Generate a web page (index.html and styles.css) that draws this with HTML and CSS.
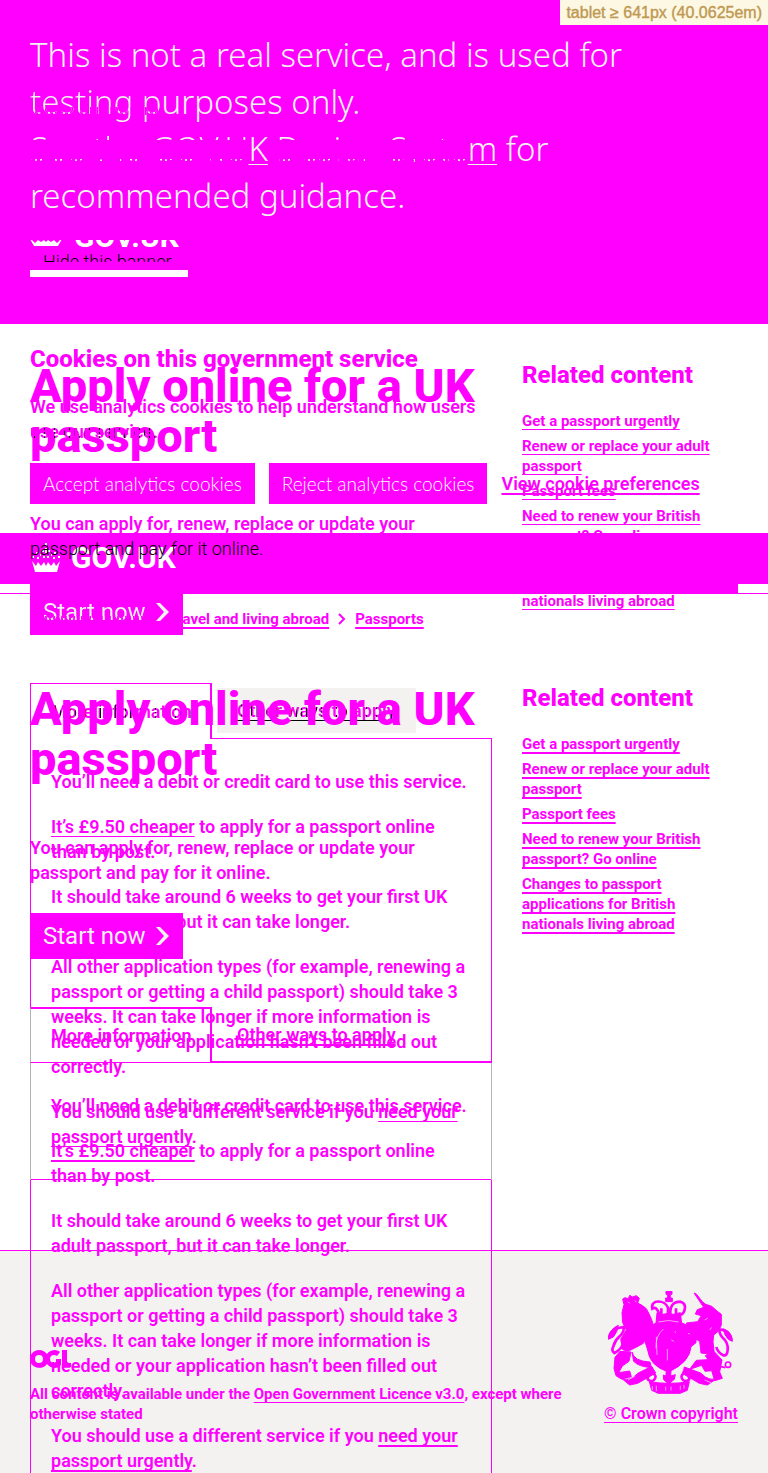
FILE: index.html
```html
<!DOCTYPE html>
<html lang="en">
<head>
<meta charset="utf-8">
<meta name="viewport" content="width=device-width, initial-scale=1">
<title>Apply online for a UK passport</title>
<link rel="stylesheet" href="styles.css">
</head>
<body>
<div class="breakpoint">tablet ≥ 641px (40.0625em)</div>
<div class="compare">

<div class="layer layer-before">
  <div class="container main">
    <main class="column">
      <h1 class="title">Apply online for a UK passport</h1>
      <p class="lead lead-raised">You can apply for, renew, replace or update your <span class="thin">passport and pay for it online.</span></p>
      <button class="start start-raised" type="button"><span class="broken">Start now</span><svg class="chevron" viewBox="0 0 14 20" aria-hidden="true"><path d="M0 1h4l9 9-9 9H0l8-9z"/></svg></button>
      <div class="tabs">
        <a class="tab tab-selected" href="#more"><span class="core">More information</span></a>
        <div class="tab-rest"><a class="tab-other" href="#other"><span class="core">Other ways to apply</span></a></div>
      </div>
      <section class="panel" id="more">
        <p>You’ll need a debit or credit card to use this service.</p>
        <p><a href="#cost">It’s £9.50 cheaper</a> to apply for a passport online than by post.</p>
        <p>It should take around 6 weeks to get your first UK adult passport, but it can take longer.</p>
        <p>All other application types (for example, renewing a passport or getting a child passport) should take 3 weeks. It can take longer if more information is needed or your application hasn’t been filled out correctly.</p>
        <p>You should use a different service if you <a href="#urgent">need your passport urgently</a>.</p>
      </section>
    </main>
    <aside class="column">
      <h2 class="heading aside-heading">Related content</h2>
      <ul class="related">
        <li><a href="#urgent">Get a passport urgently</a></li>
        <li><a href="#renew">Renew or replace your adult passport</a></li>
        <li><a href="#fees">Passport fees</a></li>
        <li><a href="#british">Need to renew your British passport? Go online</a></li>
        <li><a href="#changes">Changes to passport applications for British nationals living abroad</a></li>
      </ul>
    </aside>
  </div>
  <footer class="footer">
    <div class="licence">
      <svg class="ogl" viewBox="0 0 41 18" aria-hidden="true"><path fill-rule="evenodd" d="M9 0c4 0 6 2 8 4 2-3 5-4 8-4 2 0 4 1 5 2l-3 4c-3-2-7-1-7 3s4 5 6 3V9h5v6c-3 4-10 4-14-1-5 7-17 4-17-5 0-5 4-9 9-9zm0 5a4 4 0 1 0 0 8 4 4 0 0 0 0-8zM32 0h5v13h4v4h-9z"/></svg>
      <p>All content is available under the <a href="#ogl">Open Government Licence v3.0</a>, except where otherwise stated</p>
    </div>
    <div class="copyright">
      <svg class="crest" viewBox="60 33 378 309" aria-hidden="true">
        <g class="ink">
          <path d="M234 34h18v9h-5v11h6v11h-20V54h6V43h-5z"/>
          <path d="M207 98l14 6 18-4 18 3 20-5 4 32q-36-16-77 0z"/>
          <path d="M111 53l10 3 4-10 8 5 12-4 9 8-5 14 13 7 13 10 8 15 8 18 6 22-3 12-18 14-10 23-22 12-24 12-16-5-6-31 17-28-11-22-2-30 6-24-4-17z"/>
          <path d="M318 39l7 3 18 23 10 8 18 6 16 14 13 10v32l-8 18-15 12-2 20 3 28-20 8-19-2-4-35-19-11-12-22-9-22 34-4 11-18-18-5 6-13 19-7z"/>
          <path d="M180 142q60-42 126-2l18 18v30l-15 12q-4 48-68 76-56-18-62-66l-12-38z"/>
          <path d="M96 214l33 2-6 28-20 14-11 20 33-5 5 17-30 7-16-10-6-22 3-33z"/>
          <path d="M132 216q6 28 54 30l4 17q-38-3-53-19z"/>
          <path d="M376 212l26 28-7 36 8 19-23 7-9-30-20 2-10-18-36 12 20-27 35-2-8-12z"/>
          <path d="M97 292q25 17 54-13l40-20 12 20-54 31-24 5z"/>
          <path d="M392 292q-25 17-54-13l-49-18-4 20 49 29 24 5z"/>
          <path d="M184 305q58 10 120 0l-6 26-22 9h-65l-20-9z"/>
          <path d="M235 260h15l-2 28 14-4-3 14-17 14-15-13-1-14 8 3z"/>
        </g>
        <g class="line">
          <path d="M215 105q-9-28-22-19c-7-29 38-27 47-3v34m7-12q-3-40 30-40c24 7 13 35-2 42M220 85v24m44-24v24"/>
          <path d="M64 176q-1-16 13-25t30-10q2 16-12 28t-19 30q-7 14 3 20 22-11 27-30"/>
          <path d="M430 183q-1-18-12-27t-24-7q0 15 13 27 14 14 12 34-1 18-13 16-17-9-21-25"/>
          <path d="M200 275q-25 12-20 24 14 10 21-3 6-10-9-18m91-2q25 11 20 23-14 10-21-3-6-10 9-18"/>
        </g>
        <path class="ink" d="M61 178q2-30 30-42-3 21-15 35zM433 184q0-28-28-38 4 20 16 32z"/>
        <g class="line line-thin"><circle cx="420" cy="254" r="8"/><path d="M362 246l15 9 35 8"/></g>
        <g class="gap"><path d="M211 126q31-9 61 0M204 205q-2-37 22-58M238 207v34M193 318v12m12-13v17m28-14v12m16-12v12m28-15v13m11-15v11M205 170l2 55M120 65l5 5m15-8l5 4M350 120l10-6M365 150l6-8M120 300l20-11M350 300l20 9M300 160l6 2M250 180l8 4M260 155l4 3"/></g>
      </svg>
      <a href="#crown">© Crown copyright</a>
    </div>
  </footer>
</div>

<div class="layer layer-after">
  <section class="banner">
    <p class="notice">This is not a real service, and is used for<br><span class="dotted">testing p</span>urposes only.<br><span class="sliced">See the GOV.U</span><a href="#ds">K</a><span class="sliced"> Design Syste</span><a href="#ds">m</a> for recommended guidance.</p>
    <div class="logo logo-slice" aria-hidden="true"><svg class="crown" viewBox="0 0 32 30"><path d="M0 22l2 1 3 3 3-3 3 2 3-2 2 2 2-2 3 2 3-2 3 3 3-3 2-1-4 7H4z"/></svg><span>GOV.UK</span></div>
    <div class="hide-slice"><button class="hide" type="button">Hide this banner</button></div>
    <div class="hide-edge"></div>
  </section>
  <section class="cookies">
    <h2 class="heading">Cookies on this government service</h2>
    <p>We use analytics cookies to help understand how users <span class="core">use our service.</span></p>
    <div class="choices">
      <button class="choice" type="button">Accept analytics cookies</button>
      <button class="choice" type="button">Reject analytics cookies</button>
      <a href="#cookies">View cookie preferences</a>
    </div>
  </section>
  <header class="header">
    <div class="logo"><svg class="crown" viewBox="0 0 32 30" aria-hidden="true"><path d="M2 18l4 5 2-4 3 4 3-4 2 4 2-4 3 4 3-4 2 4 4-5-3 11H5zM15 0h2v3h-2zM12 7h2v2h-2zM18 7h2v2h-2zM15 5h2v5h-2zM6 9h2v2H6zM2 13h2v2H2zM7 14h2v2H7zM24 9h2v2h-2zM23 14h2v2h-2zM28 13h2v2h-2zM13 13h2v2h-2zM17 13h2v2h-2zM10 11h1v2h-1zM21 11h1v2h-1z"/></svg><span>GOV.UK</span></div>
  </header>
  <div class="header-bar"></div>
  <nav class="crumbs" aria-label="Breadcrumb">
    <a href="#home">Home</a><svg class="crumb-arrow" viewBox="0 0 8 12" aria-hidden="true"><path d="M1 1l5 5-5 5"/></svg><a href="#travel">Passports, travel and living abroad</a><svg class="crumb-arrow" viewBox="0 0 8 12" aria-hidden="true"><path d="M1 1l5 5-5 5"/></svg><a href="#passports">Passports</a>
  </nav>
  <div class="container">
    <main class="column">
      <h1 class="title">Apply online for a UK passport</h1>
      <p class="lead">You can apply for, renew, replace or update your passport and pay for it online.</p>
      <button class="start" type="button">Start now<svg class="chevron" viewBox="0 0 14 20" aria-hidden="true"><path d="M0 1h4l9 9-9 9H0l8-9z"/></svg></button>
      <div class="tabs">
        <a class="tab tab-selected" href="#more-2">More information</a>
        <div class="tab-rest"><a class="tab-other" href="#other-2">Other ways to apply</a></div>
      </div>
      <section class="panel" id="more-2">
        <p>You’ll need a debit or credit card to use this service.</p>
        <p><a href="#cost">It’s £9.50 cheaper</a> to apply for a passport online than by post.</p>
        <p>It should take around 6 weeks to get your first UK adult passport, but it can take longer.</p>
        <p>All other application types (for example, renewing a passport or getting a child passport) should take 3 weeks. It can take longer if more information is needed or your application hasn’t been filled out correctly.</p>
        <p>You should use a different service if you <a href="#urgent">need your passport urgently</a>.</p>
      </section>
    </main>
    <aside class="column">
      <h2 class="heading aside-heading">Related content</h2>
      <ul class="related">
        <li><a href="#urgent">Get a passport urgently</a></li>
        <li><a href="#renew">Renew or replace your adult passport</a></li>
        <li><a href="#fees">Passport fees</a></li>
        <li><a href="#british">Need to renew your British passport? Go online</a></li>
        <li><a href="#changes">Changes to passport applications for British nationals living abroad</a></li>
      </ul>
    </aside>
  </div>
</div>

</div>
</body>
</html>
```

FILE: styles.css
```css
:root {
  --ink: #ff00ff;
  --pale: #f3f2f1;
}
* { box-sizing: border-box; }
body {
  margin: 0;
  background: #fff;
  color: var(--ink);
  font: 600 18px/25px Roboto, "Liberation Sans", sans-serif;
}
h1, h2, p, ul { margin: 0; padding: 0; }
ul { list-style: none; }
button { border: 0; font-family: inherit; text-align: left; }
a {
  color: inherit;
  text-decoration: underline 1px;
  text-underline-offset: 3px;
  text-decoration-skip-ink: none;
}
.layer-after a { text-decoration-thickness: 2px; }

.breakpoint {
  position: absolute;
  top: 0;
  right: 0;
  z-index: 5;
  padding: 0 6px;
  background: #fcf8e3;
  color: #c09853;
  font: 16px/25px "Liberation Sans", sans-serif;
  -webkit-text-stroke: 0.4px #c09853;
}

/* Both page states share one grid cell. */
.compare { display: grid; grid-template-columns: minmax(0, 1fr); }
.layer { grid-area: 1 / 1; }

.container { display: grid; grid-template-columns: 2fr 1fr; margin: 0 15px; }
.column { padding: 0 15px; }
.layer-before .container { padding-top: 361px; }

.title { font-size: 47px; line-height: 50px; font-weight: 800; margin-bottom: 50px; }
.layer-after .title { margin-bottom: 51px; }
.heading { font-size: 24px; line-height: 30px; font-weight: 800; }
.aside-heading { line-height: 28px; }
.lead { margin-bottom: 28px; padding-right: 40px; }
.layer-after .lead { margin-bottom: 28px; }
.lead-raised, .start-raised { position: relative; z-index: 2; }
.thin { color: #000; font-weight: 300; }
.core {
  color: transparent;
  background: repeating-linear-gradient(90deg, var(--ink) 0 4px, #000 4px 5px);
  background-clip: text;
  -webkit-background-clip: text;
}

.start {
  display: flex;
  align-items: center;
  gap: 10px;
  height: 46px;
  padding: 0 13px;
  margin-bottom: 48px;
  background: var(--ink);
  color: var(--pale);
  font-size: 24px;
  line-height: 30px;
}
.chevron { width: 14px; height: 20px; fill: var(--pale); }
.broken {
  color: transparent;
  background:
    repeating-linear-gradient(90deg, var(--pale) 0 2px, var(--ink) 2px 4px) 0 19px / 100% 10px no-repeat,
    linear-gradient(var(--pale), var(--pale));
  background-clip: text;
  -webkit-background-clip: text;
}

.tabs { display: flex; height: 56px; }
.tab {
  width: 182px;
  padding: 15px 18px 15px 20px;
  border: 1px solid var(--ink);
  border-right-width: 2px;
  border-bottom: 0;
  text-decoration: none;
  white-space: nowrap;
}
.tab-rest { flex: 1; padding: 5px; border-bottom: 1px solid var(--ink); }
.tab-other { display: inline-block; padding: 10px 20px; }
.layer-before .tab-other { background: var(--pale); color: #000; }
.layer-before .panel {
  padding: 30px 20px;
  margin-bottom: 70px;
  border: 1px solid var(--ink);
  border-top: 0;
}
.layer-after .tab { border-top-width: 2px; border-left-color: #b1b4b6; border-bottom: 1px solid var(--ink); padding-top: 14px; }
.layer-after .tab-rest { border-bottom-width: 2px; }
.layer-after .panel {
  padding: 30px 20px 0;
  border: solid;
  border-width: 0 1px;
  border-image: linear-gradient(#b1b4b6 117px, var(--ink) 117px) 1;
}
.panel p + p { margin-top: 20px; }

.related { margin-top: 22px; font-size: 15px; line-height: 20px; font-weight: 700; }
.related li { margin-bottom: 5px; }

.footer {
  display: flex;
  align-items: flex-end;
  justify-content: space-between;
  gap: 20px;
  padding: 40px 30px 49px;
  border-top: 1px solid var(--ink);
  background: var(--pale);
  font-size: 15px;
  line-height: 20px;
  font-weight: 700;
}
.licence { display: grid; gap: 16px; }
.ogl { width: 41px; height: 18px; fill: var(--ink); }
.copyright { display: grid; gap: 10px; justify-items: center; font-size: 16px; white-space: nowrap; font-weight: 600; }
.crest { width: 126px; height: 103px; }
.ink { fill: var(--ink); stroke: var(--ink); stroke-width: 3; }
.line { fill: none; stroke: var(--ink); stroke-width: 8; }
.line-thin { stroke-width: 5; }
.gap { fill: none; stroke: var(--pale); stroke-width: 2; }

.banner { height: 324px; padding: 31px 30px 0; background: var(--ink); }
.notice { color: var(--pale); font-family: "Noto Sans", sans-serif; font-size: 33px; line-height: 47px; font-weight: 300; }
.dotted, .sliced { color: transparent; background-clip: text; -webkit-background-clip: text; }
.dotted {
  background-image:
    repeating-linear-gradient(90deg, var(--ink) 0 3px, transparent 3px 5px),
    linear-gradient(var(--pale), var(--pale));
  background-size: 100% 8px, 100% 100%;
  background-position: 0 28px, 0 0;
  background-repeat: no-repeat;
}
.sliced {
  background-image:
    repeating-linear-gradient(90deg, var(--pale) 0 2px, transparent 2px 5px),
    linear-gradient(var(--pale) 14px, transparent 14px);
  background-size: 100% 3px, 100% 100%;
  background-position: 0 33px, 0 0;
  background-repeat: no-repeat;
}
.notice a { text-decoration-thickness: 1px; }
.logo { display: flex; align-items: center; gap: 9px; color: #fff; font-size: 30px; line-height: 34px; font-weight: 700; }
.crown { width: 32px; height: 30px; fill: #fff; }
.logo-slice { height: 7px; margin-top: 21px; overflow: hidden; align-items: flex-end; gap: 12px; line-height: 20px; }
.hide-slice { height: 10px; margin-top: 5px; overflow: hidden; }
.hide { display: block; height: 20px; padding: 0 13px; background: var(--ink); color: #000; font-size: 18px; line-height: 18px; font-weight: 300; }
.hide-edge { width: 158px; height: 7px; margin-top: 8px; background: #fff; }

.cookies { padding: 20px 30px 29px; }
.cookies p { max-width: 470px; margin: 20px 0 19px; }
.choices { display: flex; align-items: center; gap: 14px; }
.choice { height: 41px; padding: 0 13px; background: var(--ink); color: #fff; font-family: Lato, sans-serif; font-size: 19px; line-height: 25px; font-weight: 300; white-space: nowrap; }

.header { padding: 8px 30px 0; height: 51px; background: var(--ink); }
.header-bar { height: 10px; border-bottom: 1px solid var(--ink); background: linear-gradient(var(--ink), var(--ink)) center / calc(100% - 60px) 100% no-repeat; }
.crumbs { display: flex; align-items: center; gap: 9px; padding: 15px 30px 55px; font-size: 15px; line-height: 20px; font-weight: 700; }
.crumb-arrow { width: 8px; height: 12px; fill: none; stroke: var(--ink); stroke-width: 2; }
```
